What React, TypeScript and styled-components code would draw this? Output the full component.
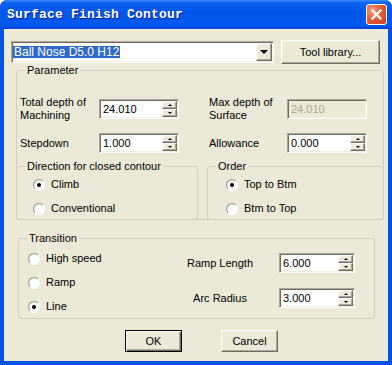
import React from 'react';
import styled, { createGlobalStyle } from 'styled-components';

const GlobalStyle = createGlobalStyle`
  html, body {
    margin: 0;
    padding: 0;
    background: #ffffff;
  }
  body {
    font-family: "Liberation Sans", Arial, sans-serif;
    font-size: 11px;
    color: #000;
  }
`;

const Window = styled.div`
  width: 392px;
  height: 365px;
  display: flex;
  flex-direction: column;
  background: #0054e3;
  border-radius: 7px 7px 0 0;
  overflow: hidden;
  box-sizing: border-box;
`;

const TitleBar = styled.div`
  height: 29px;
  flex-shrink: 0;
  display: flex;
  align-items: center;
  justify-content: space-between;
  padding: 0 5px 0 7px;
  background: linear-gradient(
    to bottom,
    #3d8ef9 0%,
    #0a62f0 10%,
    #0055e6 45%,
    #0058ee 80%,
    #0156ec 90%,
    #003fd8 100%
  );
`;

const Title = styled.span`
  font-family: "Liberation Mono", "Courier New", monospace;
  font-weight: bold;
  font-size: 13px;
  color: #ffffff;
  text-shadow: 1px 1px #0a1e8c;
  letter-spacing: 0.2px;
`;

const CloseButton = styled.div`
  width: 21px;
  height: 21px;
  box-sizing: border-box;
  border: 1px solid #ffffff;
  border-radius: 3px;
  background: radial-gradient(circle at 30% 30%, #f0a08a 0%, #e2603d 45%, #c8401e 100%);
  display: flex;
  align-items: center;
  justify-content: center;
`;

const Client = styled.div`
  flex: 1;
  margin: 0 4px 4px;
  background: #ece9d8;
  display: flex;
  flex-direction: column;
  padding-top: 11px;
  box-sizing: border-box;
`;

const TopRow = styled.div`
  display: flex;
  align-items: flex-start;
  margin-left: 7px;
  gap: 7px;
`;

const sunken = `
  border: 1px solid;
  border-color: #aca899 #ffffff #ffffff #aca899;
  box-shadow: inset 1px 1px #716f64, inset -1px -1px #f1efe2;
`;

const raised = `
  border: 1px solid;
  border-color: #ffffff #716f64 #716f64 #ffffff;
  box-shadow: inset -1px -1px #aca899, inset 1px 1px #f1efe2;
`;

const Combo = styled.div`
  width: 263px;
  height: 22px;
  margin-top: 1px;
  box-sizing: border-box;
  ${sunken}
  padding: 1px;
  background: #ffffff;
  display: flex;
  align-items: stretch;
`;

const ComboValue = styled.div`
  flex: 1;
  display: flex;
  align-items: center;
`;

const Selected = styled.span`
  background: #316ac5;
  color: #ffffff;
  padding: 0 1px;
  font-size: 12px;
  line-height: 12px;
`;

const DropButton = styled.div`
  width: 16px;
  box-sizing: border-box;
  background: #ece9d8;
  ${raised}
  display: flex;
  align-items: center;
  justify-content: center;
`;

const DownArrow = styled.div<{ $size: number }>`
  width: 0;
  height: 0;
  border-left: ${p => p.$size}px solid transparent;
  border-right: ${p => p.$size}px solid transparent;
  border-top: ${p => p.$size}px solid #000;
`;

const UpArrow = styled.div<{ $size: number }>`
  width: 0;
  height: 0;
  border-left: ${p => p.$size}px solid transparent;
  border-right: ${p => p.$size}px solid transparent;
  border-bottom: ${p => p.$size}px solid #000;
`;

const Button = styled.div<{ $w: number; $h: number; $default?: boolean }>`
  width: ${p => p.$w}px;
  height: ${p => p.$h}px;
  box-sizing: border-box;
  background: #ece9d8;
  display: flex;
  align-items: center;
  justify-content: center;
  ${p =>
    p.$default
      ? `border: 1px solid #000;
         box-shadow: inset 1px 1px #ffffff, inset -1px -1px #716f64, inset -2px -2px #aca899;`
      : raised}
`;

const Group = styled.fieldset<{ $w: number }>`
  width: ${p => p.$w}px;
  box-sizing: border-box;
  margin: 0;
  padding: 0;
  border: 1px solid #d0d0bf;
  border-radius: 3px;
  min-width: 0;
`;

const Legend = styled.legend`
  margin-left: 8px;
  padding: 0 2px;
  line-height: 13px;
  font-size: 11px;
`;

const ParamGroup = styled(Group)`
  margin: 0 0 0 12px;
`;

const ParamGrid = styled.div`
  display: grid;
  grid-template-columns: 79px 80px 108px 80px;
  row-gap: 11px;
  align-items: center;
  padding: 19px 0 0 3px;
`;

const FieldLabel = styled.div<{ $indent?: number }>`
  line-height: 13px;
  padding-left: ${p => p.$indent ?? 0}px;
`;

const Edit = styled.div<{ $w: number; $disabled?: boolean }>`
  width: ${p => p.$w}px;
  height: 20px;
  box-sizing: border-box;
  ${sunken}
  padding: 1px;
  background: ${p => (p.$disabled ? '#ece9d8' : '#ffffff')};
  display: flex;
  align-items: stretch;
`;

const EditText = styled.span<{ $disabled?: boolean }>`
  flex: 1;
  padding: 2px 0 0 2px;
  line-height: 13px;
  color: ${p => (p.$disabled ? '#aca899' : '#000')};
`;

const Spin = styled.div`
  width: 15px;
  display: flex;
  flex-direction: column;
  margin-left: auto;
`;

const SpinHalf = styled.div`
  flex: 1;
  box-sizing: border-box;
  background: #ece9d8;
  ${raised}
  display: flex;
  align-items: center;
  justify-content: center;
`;

const SubRow = styled.div`
  display: flex;
  justify-content: space-between;
  margin: 7px -1px -1px -1px;
`;

const RadioList = styled.div<{ $pl: number; $pt: number; $pb: number }>`
  display: flex;
  flex-direction: column;
  gap: 11px;
  padding: ${p => `${p.$pt}px 0 ${p.$pb}px ${p.$pl}px`};
`;

const RadioRow = styled.div<{ $gap: number }>`
  display: flex;
  align-items: center;
  gap: ${p => p.$gap}px;
  height: 13px;
  line-height: 13px;
`;

const RadioCircle = styled.div<{ $checked?: boolean }>`
  width: 12px;
  height: 12px;
  box-sizing: border-box;
  border-radius: 50%;
  border: 1px solid;
  border-color: #9b9b8f #ffffff #ffffff #9b9b8f;
  background: radial-gradient(circle at 65% 65%, #ffffff 0%, #ffffff 45%, #dcd9cb 100%);
  display: flex;
  align-items: center;
  justify-content: center;
  &::after {
    content: '';
    width: 4px;
    height: 4px;
    border-radius: 50%;
    background: #000;
    display: ${p => (p.$checked ? 'block' : 'none')};
  }
`;

const TransGroup = styled(Group)`
  margin: 12px 0 0 14px;
`;

const TransBody = styled.div`
  display: flex;
  align-items: flex-start;
`;

const TransRight = styled.div`
  display: grid;
  grid-template-columns: 100px 76px;
  column-gap: 9px;
  row-gap: 15px;
  align-items: center;
  margin: 8px 0 0 auto;
  padding-right: 19px;
`;

const CenterLabel = styled.div`
  text-align: center;
`;

const ButtonRow = styled.div`
  display: flex;
  gap: 39px;
  margin: 11px 0 0 121px;
`;

type SpinBoxProps = { value: string; w: number; disabled?: boolean };

const SpinBox = ({ value, w, disabled }: SpinBoxProps) => (
  <Edit $w={w} $disabled={disabled}>
    <EditText $disabled={disabled}>{value}</EditText>
    {!disabled && (
      <Spin>
        <SpinHalf>
          <UpArrow $size={2} />
        </SpinHalf>
        <SpinHalf>
          <DownArrow $size={2} />
        </SpinHalf>
      </Spin>
    )}
  </Edit>
);

type RadioProps = { label: string; checked?: boolean; gap: number };

const Radio = ({ label, checked, gap }: RadioProps) => (
  <RadioRow $gap={gap}>
    <RadioCircle $checked={checked} />
    <span>{label}</span>
  </RadioRow>
);

const App = () => {
  return (
    <>
      <GlobalStyle />
      <Window>
        <TitleBar>
          <Title>Surface Finish Contour</Title>
          <CloseButton>
            <svg width="11" height="11" viewBox="0 0 11 11">
              <path d="M1.5 1.5 L9.5 9.5 M9.5 1.5 L1.5 9.5" stroke="#fff" strokeWidth="2.2" strokeLinecap="square" />
            </svg>
          </CloseButton>
        </TitleBar>
        <Client>
          <TopRow>
            <Combo>
              <ComboValue>
                <Selected>Ball Nose D5.0 H12</Selected>
              </ComboValue>
              <DropButton>
                <DownArrow $size={4} />
              </DropButton>
            </Combo>
            <Button $w={99} $h={24}>Tool library...</Button>
          </TopRow>

          <ParamGroup $w={368}>
            <Legend>Parameter</Legend>
            <ParamGrid>
              <FieldLabel>
                Total depth of
                <br />
                Machining
              </FieldLabel>
              <SpinBox value="24.010" w={80} />
              <FieldLabel $indent={30}>
                Max depth of
                <br />
                Surface
              </FieldLabel>
              <SpinBox value="24.010" w={80} disabled />
              <FieldLabel>Stepdown</FieldLabel>
              <SpinBox value="1.000" w={80} />
              <FieldLabel $indent={30}>Allowance</FieldLabel>
              <SpinBox value="0.000" w={80} />
            </ParamGrid>
            <SubRow>
              <Group $w={182}>
                <Legend>Direction for closed contour</Legend>
                <RadioList $pl={16} $pt={5} $pb={4}>
                  <Radio label="Climb" checked gap={6} />
                  <Radio label="Conventional" gap={6} />
                </RadioList>
              </Group>
              <Group $w={177}>
                <Legend>Order</Legend>
                <RadioList $pl={18} $pt={5} $pb={4}>
                  <Radio label="Top to Btm" checked gap={6} />
                  <Radio label="Btm to Top" gap={6} />
                </RadioList>
              </Group>
            </SubRow>
          </ParamGroup>

          <TransGroup $w={357}>
            <Legend>Transition</Legend>
            <TransBody>
              <RadioList $pl={9} $pt={7} $pb={5}>
                <Radio label="High speed" gap={6} />
                <Radio label="Ramp" gap={6} />
                <Radio label="Line" checked gap={6} />
              </RadioList>
              <TransRight>
                <CenterLabel>Ramp Length</CenterLabel>
                <SpinBox value="6.000" w={76} />
                <CenterLabel>Arc Radius</CenterLabel>
                <SpinBox value="3.000" w={76} />
              </TransRight>
            </TransBody>
          </TransGroup>

          <ButtonRow>
            <Button $w={57} $h={22} $default>OK</Button>
            <Button $w={57} $h={22}>Cancel</Button>
          </ButtonRow>
        </Client>
      </Window>
    </>
  );
};

export default App;
